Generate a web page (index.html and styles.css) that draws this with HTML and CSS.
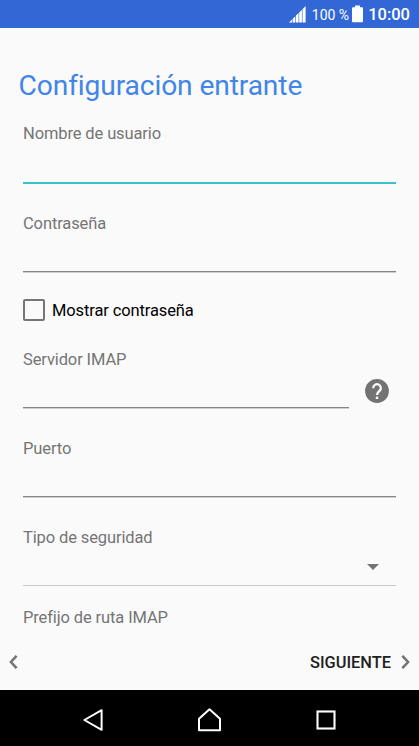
FILE: index.html
```html
<!DOCTYPE html>
<html lang="es">
<head>
  <meta charset="UTF-8">
  <meta name="viewport" content="width=device-width, initial-scale=1.0">
  <title>Configuración entrante</title>
  <link rel="stylesheet" href="styles.css">
</head>
<body>
  <header class="status-bar">
    <svg class="signal" width="17" height="17" viewBox="0 0 17 17">
      <path d="M0 16.5 L3 13.6 V16.5 Z M3.6 13 L6.4 10.2 V16.5 H3.6 Z M7 9.6 L9.6 7 V16.5 H7 Z M10.2 6.4 L12.9 3.7 V16.5 H10.2 Z M13.5 3.2 L16.6 0 V16.5 H13.5 Z" fill="#fff"/>
    </svg>
    <span class="battery-level">100 %</span>
    <svg class="battery" width="11" height="18" viewBox="0 0 11 18">
      <path d="M3 0.5 H8 V2.2 H10 Q11 2.2 11 3.2 V16.2 Q11 17.2 10 17.2 H1 Q0 17.2 0 16.2 V3.2 Q0 2.2 1 2.2 H3 Z" fill="#fff"/>
    </svg>
    <span class="clock">10:00</span>
  </header>

  <main class="content">
    <h1>Configuración entrante</h1>

    <form class="form" id="incoming">
      <div class="field active">
        <label for="username">Nombre de usuario</label>
        <input type="text" id="username">
      </div>

      <div class="field password">
        <label for="password">Contraseña</label>
        <input type="password" id="password">
      </div>

      <label class="check">
        <input type="checkbox" id="showPassword">
        <span>Mostrar contraseña</span>
      </label>

      <div class="server-row">
        <div class="field">
          <label for="server">Servidor IMAP</label>
          <input type="text" id="server">
        </div>
        <svg class="help" width="24" height="24" viewBox="0 0 24 24">
          <circle cx="12" cy="12" r="11.9" fill="#737373"/>
          <path d="M8.2 9.3 V9.1 A3.8 3.8 0 1 1 14.6 11.8 C13.1 13.1 12 13.7 12 16" fill="none" stroke="#fafafa" stroke-width="2.3"/>
          <rect x="10.8" y="17.6" width="2.4" height="2.4" fill="#fafafa"/>
        </svg>
      </div>

      <div class="field">
        <label for="port">Puerto</label>
        <input type="text" id="port">
      </div>

      <div class="field spinner">
        <label for="security">Tipo de seguridad</label>
        <div class="select" id="security">
          <svg width="12" height="6" viewBox="0 0 12 6"><path d="M0 0 H12 L6 6 Z" fill="#737373"/></svg>
        </div>
      </div>

      <div class="field prefix">
        <label>Prefijo de ruta IMAP</label>
      </div>
    </form>
  </main>

  <footer class="actions">
    <svg width="9" height="14" viewBox="0 0 9 14"><path d="M7.6 0.8 L1.9 7 L7.6 13.2" fill="none" stroke="#737373" stroke-width="2.5"/></svg>
    <div class="next">
      <span>SIGUIENTE</span>
      <svg width="9" height="14" viewBox="0 0 9 14"><path d="M1.3 0.8 L7.1 7 L1.3 13.2" fill="none" stroke="#737373" stroke-width="2.5"/></svg>
    </div>
  </footer>

  <nav class="nav-bar">
    <svg width="20" height="22" viewBox="0 0 20 22"><path d="M18.6 1.2 V20.8 L1.4 11 Z" fill="none" stroke="#fff" stroke-width="2" stroke-linejoin="round"/></svg>
    <svg width="23" height="24" viewBox="0 0 23 24"><path d="M1 22.3 V10.8 L11.5 1.2 L22 10.8 V22.3 Z" fill="none" stroke="#fff" stroke-width="2" stroke-linejoin="round"/></svg>
    <svg width="20" height="20" viewBox="0 0 20 20"><rect x="1.5" y="1.5" width="17" height="17" fill="none" stroke="#fff" stroke-width="2.1"/></svg>
  </nav>
</body>
</html>
```
FILE: styles.css
```css
* {
  margin: 0;
  padding: 0;
  box-sizing: border-box;
  font-family: Roboto, sans-serif;
}

body {
  display: flex;
  flex-direction: column;
  height: 746px;
  overflow: hidden;
  background-color: #fafafa;
}

svg {
  display: block;
  flex: none;
}

/* Status bar */
.status-bar {
  display: flex;
  align-items: center;
  justify-content: flex-end;
  flex: none;
  height: 28px;
  padding-right: 9px;
  background-color: #3367d6;
  color: #fff;
  white-space: nowrap;
}

.battery-level {
  margin: 1px 3px 0 6px;
  font-size: 14px;
}

.clock {
  margin: 1px 0 0 5px;
  font-size: 16.5px;
  font-weight: 500;
}

/* Form */
.content {
  height: 606px;
  padding: 40px 23px 0;
  overflow: hidden;
}

h1 {
  height: 36px;
  margin-left: -4.5px;
  color: #4285e8;
  font-size: 28.2px;
  font-weight: 400;
  letter-spacing: -0.12px;
  line-height: 36px;
  white-space: nowrap;
}

.form {
  padding-top: 20px;
}

.field {
  margin-bottom: 31px;
}

.field label {
  display: block;
  height: 20px;
  color: #757575;
  font-size: 16.5px;
  letter-spacing: -0.12px;
  line-height: 20px;
  white-space: nowrap;
}

.field input {
  display: block;
  width: 100%;
  height: 38px;
  border: none;
  border-bottom: 1px solid #858585;
  outline: none;
  background: none;
  box-shadow: 0 1px #cfcfcf;
  font-size: 16.5px;
}

.field.active {
  margin-bottom: 30px;
}

.field.active input {
  height: 40px;
  border-bottom: 2px solid #3ac2c9;
  box-shadow: none;
}

.field.password {
  margin-bottom: 27px;
}

.check {
  display: flex;
  align-items: center;
  height: 22px;
  margin-bottom: 29px;
  color: #000;
  font-size: 16.5px;
  letter-spacing: -0.12px;
  white-space: nowrap;
}

.check input {
  appearance: none;
  width: 22px;
  height: 22px;
  margin-right: 7px;
  border: 2px solid #757575;
  border-radius: 2px;
}

.server-row {
  display: flex;
  align-items: flex-end;
}

.server-row .field {
  width: 326px;
}

.help {
  margin: 0 0 36px 16px;
}

.field.spinner {
  margin-bottom: 22px;
}

.select {
  display: flex;
  justify-content: flex-end;
  height: 38px;
  padding: 16px 17px 0 0;
  border-bottom: 1px solid #c8c8c8;
}

/* Bottom buttons */
.actions {
  display: flex;
  align-items: center;
  justify-content: space-between;
  flex: none;
  height: 56px;
  padding: 0 9px;
}

.next {
  display: flex;
  align-items: center;
  gap: 10px;
  color: #212121;
  font-size: 16.4px;
  font-weight: 500;
}

.nav-bar {
  display: flex;
  align-items: center;
  justify-content: space-between;
  flex: none;
  height: 56px;
  padding: 4px 83px 0;
  background-color: #000;
}
```
